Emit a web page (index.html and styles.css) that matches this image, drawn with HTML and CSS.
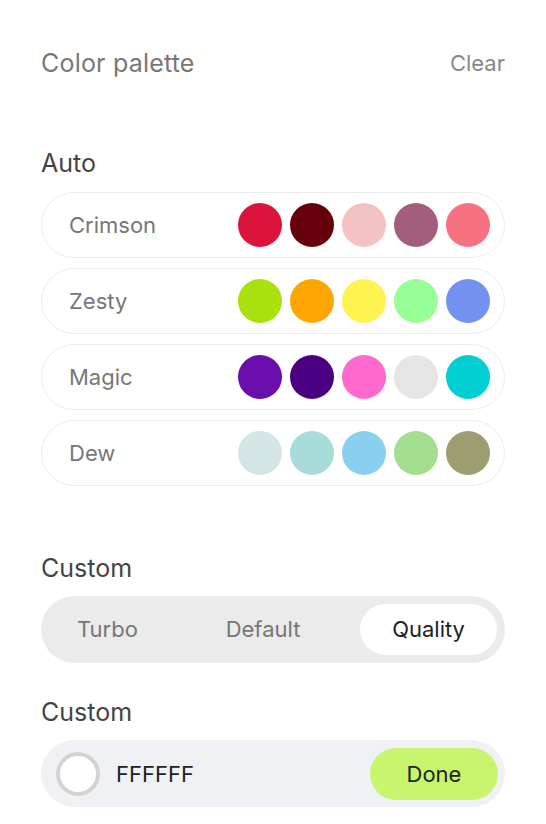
FILE: index.html
```html
<!DOCTYPE html>
<html lang="en">
<head>
  <meta charset="UTF-8">
  <meta name="viewport" content="width=device-width, initial-scale=1.0">
  <title>Color palette</title>
  <link rel="stylesheet" href="styles.css">
</head>
<body>
  <div class="panel">
    <div class="top">
      <h1>Color palette</h1>
      <span class="clear">Clear</span>
    </div>

    <h2 class="auto-title">Auto</h2>
    <div class="palettes">
      <div class="palette">
        <span class="name">Crimson</span>
        <div class="dots">
          <span class="dot c1"></span><span class="dot c2"></span><span class="dot c3"></span><span class="dot c4"></span><span class="dot c5"></span>
        </div>
      </div>
      <div class="palette">
        <span class="name">Zesty</span>
        <div class="dots">
          <span class="dot z1"></span><span class="dot z2"></span><span class="dot z3"></span><span class="dot z4"></span><span class="dot z5"></span>
        </div>
      </div>
      <div class="palette">
        <span class="name">Magic</span>
        <div class="dots">
          <span class="dot m1"></span><span class="dot m2"></span><span class="dot m3"></span><span class="dot m4"></span><span class="dot m5"></span>
        </div>
      </div>
      <div class="palette">
        <span class="name">Dew</span>
        <div class="dots">
          <span class="dot d1"></span><span class="dot d2"></span><span class="dot d3"></span><span class="dot d4"></span><span class="dot d5"></span>
        </div>
      </div>
    </div>

    <h2 class="custom-title">Custom</h2>
    <div class="segments">
      <span class="seg seg-turbo">Turbo</span>
      <span class="seg">Default</span>
      <span class="seg seg-quality active">Quality</span>
    </div>

    <h2 class="custom-title2">Custom</h2>
    <div class="hex-row">
      <span class="swatch"></span>
      <span class="hex">FFFFFF</span>
      <span class="done">Done</span>
    </div>
  </div>
</body>
</html>
```

FILE: styles.css
```css
body {
  font-family: Inter, "Noto Sans", sans-serif;
  background-color: #fff;
  margin: 0;
  padding: 0;
}

.panel {
  padding: 45px 41px 0 41px;
}

.top {
  display: flex;
  justify-content: space-between;
  align-items: center;
  height: 36px;
}

h1 {
  margin: 0;
  font-size: 25px;
  font-weight: 400;
  letter-spacing: 0.2px;
  color: #777;
}

.clear {
  font-size: 22px;
  color: #888;
}

h2 {
  margin: 0;
  font-size: 25px;
  font-weight: 400;
  color: #444;
  height: 36px;
  line-height: 36px;
}

.auto-title {
  margin-top: 64px;
  margin-bottom: 11px;
}

.palettes {
  display: flex;
  flex-direction: column;
  gap: 10px;
}

.palette {
  display: flex;
  justify-content: space-between;
  align-items: center;
  height: 64px;
  border: 1px solid #ededed;
  border-radius: 33px;
  padding: 0 14px 0 27px;
}

.name {
  font-size: 22px;
  color: #777;
}

.dots {
  display: flex;
  gap: 8px;
}

.dot {
  width: 44px;
  height: 44px;
  border-radius: 50%;
}

.c1 { background-color: #DC143C; }
.c2 { background-color: #66000A; }
.c3 { background-color: #F4C2C2; }
.c4 { background-color: #A45E7D; }
.c5 { background-color: #F67280; }

.z1 { background-color: #A8E10C; }
.z2 { background-color: #FFA500; }
.z3 { background-color: #FFF44F; }
.z4 { background-color: #98FF98; }
.z5 { background-color: #7391F0; }

.m1 { background-color: #6A0DAD; }
.m2 { background-color: #4B0082; }
.m3 { background-color: #FF69CC; }
.m4 { background-color: #E5E5E5; }
.m5 { background-color: #00CED1; }

.d1 { background-color: #D3E5E5; }
.d2 { background-color: #A8DCD8; }
.d3 { background-color: #89CFF0; }
.d4 { background-color: #A2DE8E; }
.d5 { background-color: #9E9D72; }

.custom-title {
  margin-top: 64px;
  margin-bottom: 10px;
}

.segments {
  display: flex;
  justify-content: space-between;
  align-items: center;
  height: 67px;
  padding: 0 8px;
  background-color: #eaebea;
  border-radius: 34px;
  box-sizing: border-box;
}

.seg {
  font-size: 22px;
  color: #777;
  height: 51px;
  line-height: 51px;
  padding: 0 30px;
  border-radius: 26px;
}

.seg-turbo {
  padding: 0 28px;
}

.seg-quality {
  padding: 0 32px;
}

.seg.active {
  background-color: #fff;
  color: #222;
}

.custom-title2 {
  margin-top: 31px;
  margin-bottom: 10px;
}

.hex-row {
  display: flex;
  align-items: center;
  height: 67px;
  padding: 0 7px 0 15px;
  background-color: #f0f1f5;
  border-radius: 34px;
  box-sizing: border-box;
}

.swatch {
  width: 44px;
  height: 44px;
  border-radius: 50%;
  border: 4px solid #d3d3d3;
  background-color: #fff;
  box-sizing: border-box;
}

.hex {
  margin-left: 16px;
  font-size: 22px;
  color: #222;
  flex: 1;
}

.done {
  width: 128px;
  height: 52px;
  line-height: 52px;
  text-align: center;
  border-radius: 26px;
  background-color: #c8f56e;
  font-size: 22px;
  color: #222;
}
```
